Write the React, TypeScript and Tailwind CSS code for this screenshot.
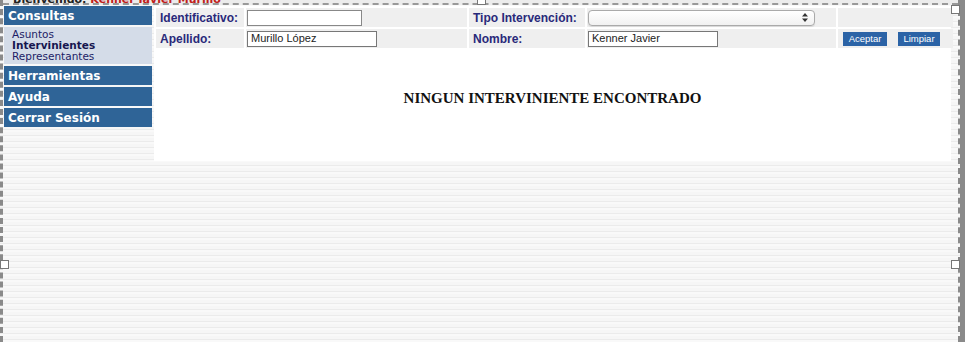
import React from 'react';

const stripes =
  'bg-[repeating-linear-gradient(to_bottom,#f6f6f6_0px,#f6f6f6_3px,#ebebeb_3px,#ebebeb_4px,#f9f9f9_4px,#f9f9f9_6px)]';

function Handle({ className }: { className: string }) {
  return <div className={`absolute h-[9px] w-[9px] border border-[#777] bg-white ${className}`} />;
}

function MenuHeader({ children }: { children: React.ReactNode }) {
  return (
    <div className="flex h-[19px] items-center bg-[#2f6497] px-[4px] font-['DejaVu_Sans',sans-serif] text-[12px] font-bold text-white">
      {children}
    </div>
  );
}

function Label({ children }: { children: React.ReactNode }) {
  return (
    <div className="flex items-center bg-[#efefef] px-[4px] text-[12px] font-bold text-[#29297a]">{children}</div>
  );
}

export default function App() {
  return (
    <div className="relative flex h-[342px] w-[965px] overflow-hidden bg-[#8a8a8a] font-['Liberation_Sans',Arial,sans-serif]">
      <div className={`relative flex h-full w-[960px] flex-col border-l-[3px] border-r-[2px] border-dashed border-[#8a8a8a] ${stripes}`}>
        {/* header strip, mostly cut off */}
        <div className="h-[5px] overflow-hidden border-b-[2px] border-dashed border-[#999] bg-[#ececec]">
          <div className="-mt-[6px] pl-[10px] font-['DejaVu_Sans',sans-serif] text-[11px] font-bold leading-[12px]">
            <span className="text-[#222]">Bienvenido: </span>
            <span className="text-[#c0201a]">Kenner Javier Murillo</span>
          </div>
        </div>

        <div className="mt-[1px] flex">
          {/* sidebar */}
          <div className="flex w-[149px] flex-col gap-[2px] pl-[1px]">
            <MenuHeader>Consultas</MenuHeader>
            <div className="flex flex-col bg-[#d4dce8] px-[8px] py-[2px] font-['DejaVu_Sans',sans-serif] text-[10.5px] leading-[11px] text-[#1c1c66]">
              <span>Asuntos</span>
              <span className="font-bold text-[#16164f]">Intervinientes</span>
              <span>Representantes</span>
            </div>
            <MenuHeader>Herramientas</MenuHeader>
            <MenuHeader>Ayuda</MenuHeader>
            <MenuHeader>Cerrar Sesión</MenuHeader>
          </div>

          {/* main panel */}
          <div className="ml-[2px] flex h-[155px] w-[797px] flex-col bg-white pt-[2px]">
            <div className="grid grid-cols-[88px_221px_116px_249px_115px] gap-[2px] px-[2px]">
              <Label>Identificativo:</Label>
              <div className="flex h-[19px] items-center bg-[#efefef] px-[1px]">
                <div className="h-[16px] w-[115px] border border-[#888] bg-white" />
              </div>
              <Label>Tipo Intervención:</Label>
              <div className="flex items-center bg-[#efefef] px-[1px]">
                <div className="flex h-[16px] w-[227px] items-center justify-end rounded-[4px] border border-[#aaa] bg-gradient-to-b from-white to-[#f1f1f1] pr-[6px] shadow-[0_1px_1px_rgba(0,0,0,0.1)]">
                  <svg width="6" height="9" viewBox="0 0 6 9">
                    <path d="M3 0 L6 3.5 H0 Z M0 5.5 H6 L3 9 Z" fill="#333" />
                  </svg>
                </div>
              </div>
              <div className="bg-[#efefef]" />

              <Label>Apellido:</Label>
              <div className="flex h-[19px] items-center bg-[#efefef] px-[1px]">
                <div className="flex h-[16px] w-[130px] items-center border border-[#777] bg-white px-[3px] text-[11px] text-[#222]">
                  Murillo López
                </div>
              </div>
              <Label>Nombre:</Label>
              <div className="flex items-center bg-[#efefef] px-[1px]">
                <div className="flex h-[16px] w-[130px] items-center border border-[#777] bg-white px-[3px] text-[11px] text-[#222]">
                  Kenner Javier
                </div>
              </div>
              <div className="flex items-center gap-[11px] bg-[#efefef] pl-[5px]">
                <button className="h-[14px] w-[44px] bg-[#2b63a6] text-[9.5px] leading-[14px] text-white">Aceptar</button>
                <button className="h-[14px] w-[42px] bg-[#2b63a6] text-[9.5px] leading-[14px] text-white">Limpiar</button>
              </div>
            </div>

            <div className="mt-[39px] text-center font-['Liberation_Serif',serif] text-[15px] font-bold text-[#111]">
              NINGUN INTERVINIENTE ENCONTRADO
            </div>
          </div>
        </div>

        <Handle className="left-[474px] top-[-4px]" />
        <Handle className="left-[-3px] top-[260px]" />
        <Handle className="right-[-2px] top-[260px]" />
        <Handle className="right-[-2px] top-[5px]" />
      </div>
    </div>
  );
}
